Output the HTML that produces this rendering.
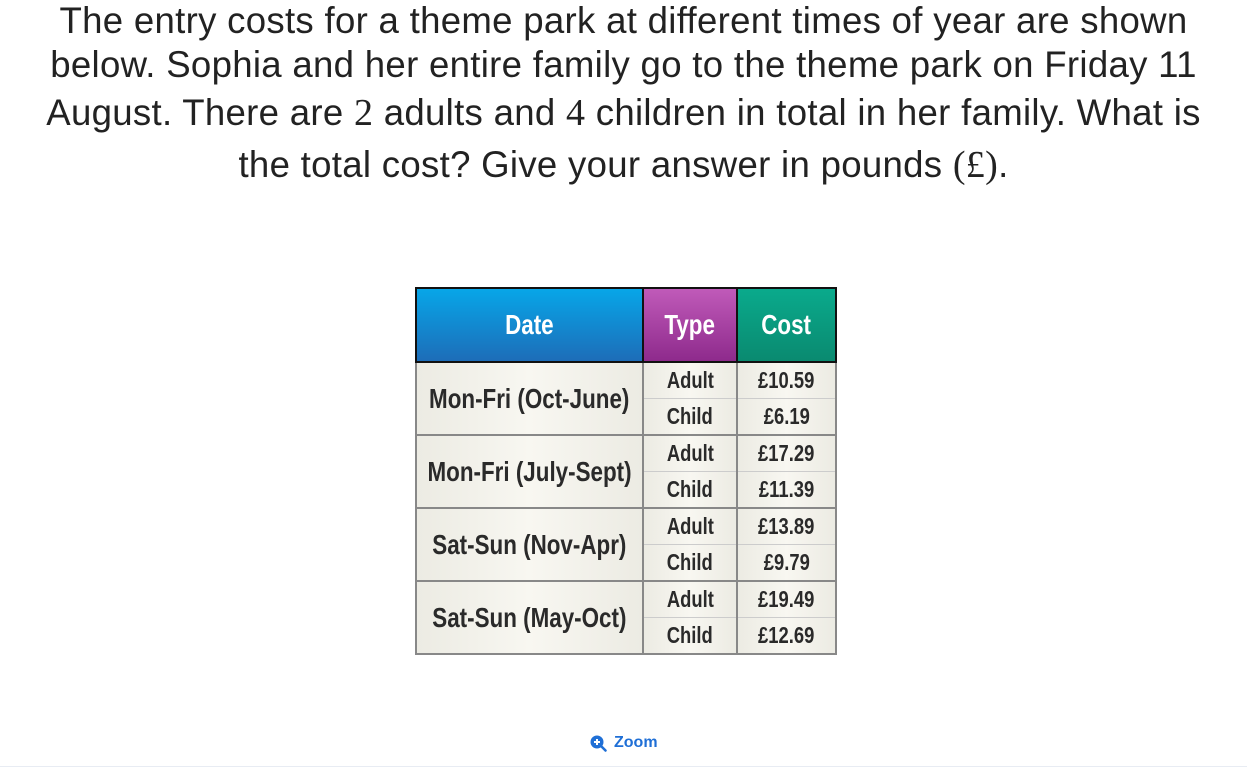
<!DOCTYPE html>
<html><head><meta charset="utf-8"><style>
body{margin:0;width:1247px;height:773px;background:#fff;overflow:hidden;font-family:"Liberation Sans",sans-serif;}
.q{position:absolute;left:0;width:1247px;text-align:center;color:#222;font-size:36.6px;}
.l{position:absolute;left:0;width:1247px;text-align:center;white-space:nowrap;letter-spacing:0.3px}
.m{font-family:"Liberation Serif",serif;font-size:38px;}
table{position:absolute;left:415px;top:287px;width:420px;border-collapse:collapse;table-layout:fixed;font-family:"Liberation Sans",sans-serif;font-weight:bold;}
td{border:2px solid #888;text-align:center;padding:0;color:#2a2a2a;white-space:nowrap;overflow:visible;background:linear-gradient(90deg,#ecebe3,#f8f7f1 50%,#ecebe3);}
th{border:2px solid #111;color:#fff;font-size:28px;height:70px;}
.n{display:inline-block;transform:scaleX(0.8);margin:0 -40px;}
.d{font-size:28px;}
.s{font-size:23px;height:35px;}
.top{border-bottom:1px solid #ccc;}
.bot{border-top:1px solid #ccc;}
</style></head><body>
<div class="q">
<div class="l" style="top:0px">The entry costs for a theme park at different times of year are shown</div>
<div class="l" style="top:44px">below. Sophia and her entire family go to the theme park on Friday 11</div>
<div class="l" style="top:91px">August. There are <span class="m">2</span> adults and <span class="m">4</span> children in total in her family. What is</div>
<div class="l" style="top:143px">the total cost? Give your answer in pounds <span class="m">(£)</span>.</div>
</div>
<table>
<colgroup><col style="width:227px"><col style="width:94px"><col style="width:99px"></colgroup>
<tr><th style="background:linear-gradient(#07a6e8,#1d6db8)"><span class="n">Date</span></th><th style="background:linear-gradient(#c05ab9,#8e2a8c)"><span class="n">Type</span></th><th style="background:linear-gradient(#0aaa8c,#0a8a70)"><span class="n">Cost</span></th></tr>
<tr><td rowspan="2" class="d"><span class="n">Mon-Fri (Oct-June)</span></td><td class="s top"><span class="n">Adult</span></td><td class="s top"><span class="n">£10.59</span></td></tr>
<tr><td class="s bot"><span class="n">Child</span></td><td class="s bot"><span class="n">£6.19</span></td></tr>
<tr><td rowspan="2" class="d"><span class="n">Mon-Fri (July-Sept)</span></td><td class="s top"><span class="n">Adult</span></td><td class="s top"><span class="n">£17.29</span></td></tr>
<tr><td class="s bot"><span class="n">Child</span></td><td class="s bot"><span class="n">£11.39</span></td></tr>
<tr><td rowspan="2" class="d"><span class="n">Sat-Sun (Nov-Apr)</span></td><td class="s top"><span class="n">Adult</span></td><td class="s top"><span class="n">£13.89</span></td></tr>
<tr><td class="s bot"><span class="n">Child</span></td><td class="s bot"><span class="n">£9.79</span></td></tr>
<tr><td rowspan="2" class="d"><span class="n">Sat-Sun (May-Oct)</span></td><td class="s top"><span class="n">Adult</span></td><td class="s top"><span class="n">£19.49</span></td></tr>
<tr><td class="s bot"><span class="n">Child</span></td><td class="s bot"><span class="n">£12.69</span></td></tr>
</table>
<div style="position:absolute;left:590px;top:734px;color:#1f6fd6;font-size:16px;font-weight:bold;display:flex;align-items:center;gap:7px">
<svg width="17" height="17" viewBox="0 0 17 17"><circle cx="7" cy="7" r="6.5" fill="#1f6fd6"/><path d="M7 4v6M4 7h6" stroke="#fff" stroke-width="2"/><path d="M11.5 11.5l4 4" stroke="#1f6fd6" stroke-width="2.5" stroke-linecap="round"/></svg>Zoom</div>
<div style="position:absolute;left:0;top:766px;width:1247px;height:1px;background:#e8ecf3"></div>
</body></html>
